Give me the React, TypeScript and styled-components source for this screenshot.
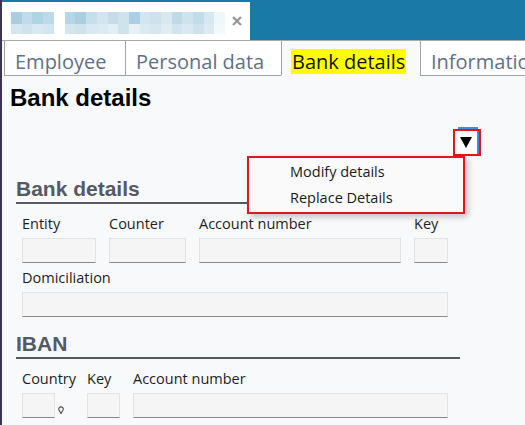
import React, { type FC } from "react";
import styled, { createGlobalStyle } from "styled-components";

const topBlocks = [
  ["#a9cee1", "#c0dcea", "#b1d4e5", "#bdd9e8"],
  [
    "#b5d6e6", "#a9cfe1", "#c5dfeb", "#d3e6ef", "#c6dcea", "#d0e3ed", "#a9d0e3",
    "#d3e6ef", "#cde2ec", "#d7e8f0", "#c0d9e7", "#cfe3ed", "#c3dce9", "#d5e7f0", "#f0f7fa",
  ],
];
const bottomBlocks = [
  ["#d4e6ef", "#d0e3ed", "#d9e9f1", "#d3e5ee"],
  [
    "#d3e6ef", "#cfe3ed", "#d8e9f1", "#dcebf2", "#e3eff4", "#cfe3ed", "#e6f1f6",
    "#dbeaf2", "#d6e7f0", "#dfedf3", "#d2e4ee", "#d9e9f1", "#d0e3ed", "#dcebf2", "#f3f8fb",
  ],
];

const tabs = [
  { label: "Employee", width: 121 },
  { label: "Personal data", width: 156 },
  { label: "Bank details", width: 139, active: true },
  { label: "Information", width: 120 },
];

const Field: FC<{ label: string; width: number; inputWidth?: number; pin?: boolean }> = ({
  label,
  width,
  inputWidth,
  pin,
}) => (
  <FieldBox $w={width}>
    <Label>{label}</Label>
    <InputLine>
      <Input $w={inputWidth} />
      {pin && (
        <Pin width="6" height="8" viewBox="0 0 6 8">
          <path d="M3 7.5 L1 4 A2.2 2.2 0 1 1 5 4 Z" fill="none" stroke="#555" strokeWidth="1.2" />
        </Pin>
      )}
    </InputLine>
  </FieldBox>
);

export default function App() {
  return (
    <>
      <GlobalStyle />
      <Screen>
        <TitleBar>
          <TitleTab>
            <Blur>
              {[0, 1].map((g) => (
                <BlurGroup key={g}>
                  <BlurRow>
                    {topBlocks[g].map((c, i) => (
                      <Block key={i} $c={c} />
                    ))}
                  </BlurRow>
                  <BlurRow>
                    {bottomBlocks[g].map((c, i) => (
                      <Block key={i} $c={c} />
                    ))}
                  </BlurRow>
                </BlurGroup>
              ))}
            </Blur>
            <Close width="10" height="10" viewBox="0 0 10 10">
              <path d="M1 1 L9 9 M9 1 L1 9" stroke="#9a9a9a" strokeWidth="2.4" />
            </Close>
          </TitleTab>
        </TitleBar>
        <TabRow>
          {tabs.map((t) => (
            <Tab key={t.label} $w={t.width} $active={!!t.active}>
              {t.active ? <Highlight>{t.label}</Highlight> : t.label}
            </Tab>
          ))}
        </TabRow>
        <Content>
          <PageTitle>Bank details</PageTitle>
          <Toolbar>
            <DropWrap>
              <DropButton>
                <svg width="12" height="11" viewBox="0 0 12 11">
                  <polygon points="0,0 12,0 6,11" fill="#000" />
                </svg>
              </DropButton>
              <Menu>
                <MenuItem>Modify details</MenuItem>
                <MenuItem>Replace Details</MenuItem>
              </Menu>
            </DropWrap>
          </Toolbar>
          <Section>
            <SectionTitle>Bank details</SectionTitle>
            <Fields>
              <Row>
                <Field label="Entity" width={74} />
                <Field label="Counter" width={77} />
                <Field label="Account number" width={202} />
                <Field label="Key" width={34} />
              </Row>
              <Row>
                <Field label="Domiciliation" width={426} />
              </Row>
            </Fields>
          </Section>
          <Section $gap>
            <SectionTitle>IBAN</SectionTitle>
            <Fields>
              <Row>
                <Field label="Country" width={52} inputWidth={33} pin />
                <Field label="Key" width={33} />
                <Field label="Account number" width={315} />
              </Row>
            </Fields>
          </Section>
        </Content>
      </Screen>
    </>
  );
}

const GlobalStyle = createGlobalStyle`
  html, body {
    margin: 0;
    padding: 0;
  }
  body {
    background: #f8f9fb;
    font-family: "Open Sans", "Noto Sans", sans-serif;
  }
`;

const Screen = styled.div`
  width: 525px;
  height: 425px;
  overflow: hidden;
  box-sizing: border-box;
  border-left: 2px solid #3d3452;
  background: #f8f9fb;
  display: flex;
  flex-direction: column;
`;

const TitleBar = styled.div`
  height: 40px;
  flex-shrink: 0;
  box-sizing: border-box;
  padding-top: 2px;
  background: #1b79a8;
  display: flex;
`;

const TitleTab = styled.div`
  width: 248px;
  background: #fff;
  display: flex;
  align-items: center;
  padding-left: 9px;
  box-sizing: border-box;
`;

const Blur = styled.div`
  display: flex;
  gap: 11px;
  margin-top: 4px;
`;

const BlurGroup = styled.div`
  display: flex;
  flex-direction: column;
`;

const BlurRow = styled.div`
  display: flex;
  height: 12px;
  & + & {
    height: 10px;
  }
`;

const Block = styled.span<{ $c: string }>`
  width: 10.7px;
  background: ${({ $c }) => $c};
`;

const Close = styled.svg`
  margin-left: 7px;
  margin-top: -1px;
`;

const TabRow = styled.div`
  display: flex;
  border-top: 1px solid #a9a9a9;
  padding-left: 2px;
  flex-shrink: 0;
`;

const Tab = styled.div<{ $w: number; $active: boolean }>`
  width: ${({ $w }) => $w}px;
  flex-shrink: 0;
  height: 35px;
  box-sizing: border-box;
  padding: 7px 0 0 10px;
  border-left: 1px solid #a3a3a3;
  border-bottom: 1px solid ${({ $active }) => ($active ? "transparent" : "#a3a3a3")};
  background: ${({ $active }) => ($active ? "#f8f9fb" : "#fff")};
  color: #5f7089;
  font-size: 20px;
  line-height: 27px;
  white-space: nowrap;
  overflow: hidden;
`;

const Highlight = styled.span`
  display: inline-block;
  background: #ffff00;
  color: #111;
  height: 25px;
  line-height: 25px;
  margin-left: -1px;
  padding: 0 1px;
`;

const Content = styled.div`
  padding: 8px 0 0 8px;
`;

const PageTitle = styled.h1`
  margin: 0;
  font-family: "Liberation Sans", Arial, sans-serif;
  font-weight: bold;
  font-size: 24px;
  line-height: 28px;
  color: #000;
`;

const Toolbar = styled.div`
  display: flex;
  justify-content: flex-end;
  margin-top: 17px;
  padding-right: 44px;
`;

const DropWrap = styled.div`
  position: relative;
  width: 28px;
  height: 27px;
  box-sizing: border-box;
  border: 2px solid #e8141b;
  &::before {
    content: "";
    position: absolute;
    top: -4px;
    left: 3px;
    width: 20px;
    height: 2px;
    background: #3b8de0;
  }
`;

const DropButton = styled.div`
  width: 24px;
  height: 23px;
  box-sizing: border-box;
  background: #fff;
  border-right: 2px solid #3b8de0;
  display: flex;
  align-items: center;
  justify-content: center;
`;

const Menu = styled.div`
  position: absolute;
  top: 25px;
  right: 14px;
  width: 218px;
  height: 58px;
  box-sizing: border-box;
  padding-top: 1px;
  border: 2px solid #e8141b;
  background: #fafafa;
  box-shadow: 3px 3px 6px rgba(0, 0, 0, 0.22);
  z-index: 2;
`;

const MenuItem = styled.div`
  height: 26px;
  line-height: 26px;
  padding-left: 41px;
  font-size: 14.5px;
  color: #1a1a1a;
  white-space: nowrap;
`;

const Section = styled.div<{ $gap?: boolean }>`
  margin: ${({ $gap }) => ($gap ? "15px" : "21px")} 0 0 6px;
  width: 444px;
`;

const SectionTitle = styled.div`
  font-family: "Liberation Sans", Arial, sans-serif;
  font-weight: bold;
  font-size: 21px;
  line-height: 24px;
  color: #545a63;
  padding-bottom: 1px;
  border-bottom: 2px solid #545a63;
`;

const Fields = styled.div`
  display: flex;
  flex-direction: column;
  gap: 6px;
  margin-top: 11px;
  padding-left: 6px;
`;

const Row = styled.div`
  display: flex;
  gap: 13px;
`;

const FieldBox = styled.div<{ $w: number }>`
  width: ${({ $w }) => $w}px;
  display: flex;
  flex-direction: column;
`;

const Label = styled.div`
  font-size: 14.5px;
  line-height: 18px;
  color: #1e1e1e;
  margin-bottom: 5px;
  white-space: nowrap;
`;

const InputLine = styled.div`
  display: flex;
  align-items: flex-end;
  gap: 3px;
`;

const Input = styled.div<{ $w?: number }>`
  width: ${({ $w }) => ($w ? `${$w}px` : "100%")};
  height: 25px;
  box-sizing: border-box;
  background: #f5f5f5;
  border: 1px solid #e3e3e3;
  border-bottom: 1px solid #8a8a8a;
`;

const Pin = styled.svg`
  margin-bottom: 4px;
`;
